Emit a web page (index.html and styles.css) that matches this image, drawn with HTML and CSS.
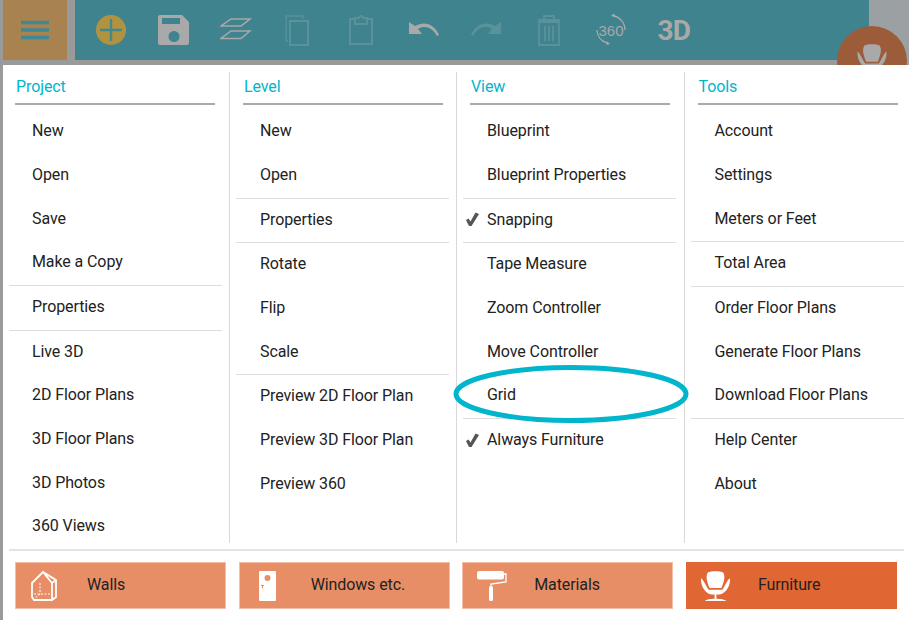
FILE: index.html
```html
<!DOCTYPE html>
<html lang="en">
<head>
<meta charset="utf-8">
<title>Floor plan menu</title>
<link rel="stylesheet" href="styles.css">
</head>
<body>
<header class="topbar">
  <button class="menu-btn">
    <svg width="28" height="20" viewBox="0 0 28 20"><path d="M0 2.500h28M0 10h28M0 17.500h28" stroke="#3f8894" stroke-width="3.500"/></svg>
  </button>
  <div class="toolbar">
    <span class="tool"><svg width="32" height="32" viewBox="0 0 32 32"><circle cx="16" cy="16" r="15" fill="#b1933f"/><path d="M16 5v22M5 16h22" stroke="#3f8894" stroke-width="2.400"/></svg></span>
    <span class="tool"><svg width="32" height="32" viewBox="0 0 32 32"><path fill="#a9a9a9" fill-rule="evenodd" d="M2 1h22l7 7v21a2 2 0 0 1-2 2H2a2 2 0 0 1-2-2V3a2 2 0 0 1 2-2zM4 4v6h18V4zM16 17a5.500 5.500 0 1 0 0 11 5.500 5.500 0 0 0 0-11z"/></svg></span>
    <span class="tool"><svg width="32" height="32" viewBox="0 0 32 32"><path d="M11 5H30L21 12H1zM11 17H30L21 24.500H1z" fill="none" stroke="#a9a9a9" stroke-width="1.500"/></svg></span>
    <span class="tool"><svg width="32" height="32" viewBox="0 0 32 32"><path d="M5 27H3V2h17v3" fill="none" stroke="#5a929c" stroke-width="1.300"/><rect x="7" y="7" width="18" height="24" fill="none" stroke="#5a929c" stroke-width="2"/></svg></span>
    <span class="tool"><svg width="32" height="32" viewBox="0 0 32 32"><path d="M10 5H5v25h22V5h-5" fill="none" stroke="#5a929c" stroke-width="2"/><path d="M10 4h4a2 2 0 0 1 4 0h4v6H10z" fill="none" stroke="#5a929c" stroke-width="2"/></svg></span>
    <span class="tool"><svg width="32" height="32" viewBox="0 0 32 32"><path d="M1 8v12h13l-4-5c7-4 14-2 19 7l2-1c-4-10-14-15-24-9z" fill="#a9a9a9"/></svg></span>
    <span class="tool"><svg width="32" height="32" viewBox="0 0 32 32"><path d="M31 8v12H18l4-5c-7-4-14-2-19 7l-2-1c4-10 14-15 24-9z" fill="#5a929c"/></svg></span>
    <span class="tool"><svg width="32" height="32" viewBox="0 0 32 32"><path d="M6 8h20v23H6zM5 6h22M11 6V2h10v4M12 12v15M16 12v15M20 12v15" fill="none" stroke="#5a929c" stroke-width="1.800"/></svg></span>
    <span class="tool"><svg class="icon-360" width="32" height="32" viewBox="0 0 32 32"><path d="M18 1.500C25 3 30 9 30 16M2 16C2 22 6 27 12 29" fill="none" stroke="#a9a9a9" stroke-width="1.300"/><path d="M16 1.500l3.500-2v4zM15 30l-3.500-3v4z" fill="#a9a9a9"/><text x="16" y="22" text-anchor="middle" class="t360">360</text></svg></span>
    <span class="tool three-d">3D</span>
  </div>
  <div class="side"></div>
  <div class="fab">
    <svg width="34" height="34" viewBox="0 0 40 40"><path d="M11 3C15 1 25 1 29 3 32 8 30 14 27 22H13C10 14 8 8 11 3zM3 10C6 12 8 18 12 24H28C32 18 34 12 37 10 38 18 33 28 25 30H15C7 28 2 18 3 10z" fill="#a9a9a9"/></svg>
  </div>
</header>

<main class="panel">
  <div class="columns">
    <section class="col col-first">
      <h2 class="col-title">Project</h2>
      <ul class="items">
        <li class="item">New</li>
        <li class="item">Open</li>
        <li class="item">Save</li>
        <li class="item">Make a Copy</li>
        <li class="rule"></li>
        <li class="item">Properties</li>
        <li class="rule"></li>
        <li class="item">Live 3D</li>
        <li class="item">2D Floor Plans</li>
        <li class="item">3D Floor Plans</li>
        <li class="item">3D Photos</li>
        <li class="item">360 Views</li>
      </ul>
    </section>
    <section class="col">
      <h2 class="col-title">Level</h2>
      <ul class="items">
        <li class="item">New</li>
        <li class="item">Open</li>
        <li class="rule"></li>
        <li class="item">Properties</li>
        <li class="rule"></li>
        <li class="item">Rotate</li>
        <li class="item">Flip</li>
        <li class="item">Scale</li>
        <li class="rule"></li>
        <li class="item">Preview 2D Floor Plan</li>
        <li class="item">Preview 3D Floor Plan</li>
        <li class="item">Preview 360</li>
      </ul>
    </section>
    <section class="col">
      <h2 class="col-title">View</h2>
      <ul class="items">
        <li class="item">Blueprint</li>
        <li class="item">Blueprint Properties</li>
        <li class="rule"></li>
        <li class="item"><svg class="check" width="14" height="14" viewBox="0 0 14 14"><path d="M1 8l2.500-1.500 2 3L10.500 0.500 14 2 6.500 14H4z" fill="#555"/></svg>Snapping</li>
        <li class="rule"></li>
        <li class="item">Tape Measure</li>
        <li class="item">Zoom Controller</li>
        <li class="item">Move Controller</li>
        <li class="item">Grid</li>
        <li class="rule"></li>
        <li class="item"><svg class="check" width="14" height="14" viewBox="0 0 14 14"><path d="M1 8l2.500-1.500 2 3L10.500 0.500 14 2 6.500 14H4z" fill="#555"/></svg>Always Furniture</li>
      </ul>
    </section>
    <section class="col col-last">
      <h2 class="col-title">Tools</h2>
      <ul class="items">
        <li class="item">Account</li>
        <li class="item">Settings</li>
        <li class="item">Meters or Feet</li>
        <li class="rule"></li>
        <li class="item">Total Area</li>
        <li class="rule"></li>
        <li class="item">Order Floor Plans</li>
        <li class="item">Generate Floor Plans</li>
        <li class="item">Download Floor Plans</li>
        <li class="rule"></li>
        <li class="item">Help Center</li>
        <li class="item">About</li>
      </ul>
    </section>
  </div>
  <div class="foot-rule"></div>
  <nav class="tabs">
    <a class="tab">
      <svg class="tab-icon" width="30" height="32" viewBox="0 0 30 32"><path d="M1 13L12 2 25 10V27L21 30H3L1 27zM12 2L21 13V30M21 13L25 10" fill="none" stroke="#fff" stroke-width="1.800"/><path d="M9 13V24M3 24H19M9 24L4 28" fill="none" stroke="#fff" stroke-width="1" stroke-dasharray="2 1.500"/></svg>
      Walls
    </a>
    <a class="tab">
      <svg class="tab-icon" width="30" height="32" viewBox="0 0 30 32"><path fill="#fff" fill-rule="evenodd" d="M5 1h15a1 1 0 0 1 1 1v28a1 1 0 0 1-1 1H5a1 1 0 0 1-1-1V2a1 1 0 0 1 1-1zM12.500 5a3 3 0 1 0 0 6 3 3 0 0 0 0-6z"/><path d="M6 15.500h3M7.500 15.500v3" stroke="#e88e66" stroke-width="1"/></svg>
      Windows etc.
    </a>
    <a class="tab">
      <svg class="tab-icon" width="30" height="32" viewBox="0 0 30 32"><rect x="-1" y="1" width="27" height="8.500" rx="2" fill="#fff"/><path d="M26 4h2v8l-15 2v4" fill="none" stroke="#fff" stroke-width="1.300"/><rect x="11" y="16" width="4" height="15" rx="1.500" fill="#fff"/></svg>
      Materials
    </a>
    <a class="tab tab-active">
      <svg class="tab-icon" width="30" height="32" viewBox="0 0 30 32"><path transform="translate(-3.500 0) scale(.85 .82)" d="M11 3C15 1 25 1 29 3 32 8 30 14 27 22H13C10 14 8 8 11 3zM3 10C6 12 8 18 12 24H28C32 18 34 12 37 10 38 18 33 28 25 30H15C7 28 2 18 3 10z" fill="#fff"/><path d="M13.500 24v5" stroke="#fff" stroke-width="1.800"/><path d="M3 31c1-3 20-3 21 0z" fill="#fff"/></svg>
      Furniture
    </a>
  </nav>
  <svg class="highlight" width="240" height="66" viewBox="0 0 240 66"><ellipse cx="120" cy="33" rx="115" ry="26.500" fill="none" stroke="#00b5cc" stroke-width="5"/></svg>
</main>
</body>
</html>
```

FILE: styles.css
```css
* { box-sizing: border-box; }
html, body { margin: 0; padding: 0; }
body {
  width: 909px;
  height: 620px;
  overflow: hidden;
  background: #9a9a9a;
  font-family: "Roboto", sans-serif;
  font-size: 16px;
  letter-spacing: -0.1px;
  color: #222;
}
.topbar {
  position: relative;
  display: flex;
  height: 65px;
  padding-left: 3px;
}
.menu-btn {
  width: 64px;
  height: 60px;
  border: 0;
  padding: 0;
  background: #a8824f;
  display: flex;
  align-items: center;
  justify-content: center;
}
.toolbar {
  margin-left: 8px;
  width: 794px;
  height: 60px;
  background: #3f838f;
  display: flex;
  align-items: center;
  padding-left: 5px;
}
.tool {
  width: 62.500px;
  display: flex;
  justify-content: center;
  align-items: center;
}
.three-d {
  font-family: "Roboto", sans-serif;
  font-weight: 700;
  font-size: 28px;
  letter-spacing: -1px;
  color: #a9a9a9;
}
.icon-360 { overflow: visible; }
.t360 {
  font-family: "Liberation Sans", sans-serif;
  font-size: 15px;
  letter-spacing: 0;
  fill: #a9a9a9;
}
.side {
  flex: 1;
  background: #9ba0a2;
  height: 65px;
}
.fab {
  position: absolute;
  left: 837px;
  top: 26px;
  width: 70px;
  height: 70px;
  border-radius: 50%;
  background: #9c5c3a;
  display: flex;
  justify-content: center;
  padding-top: 17px;
}
.panel {
  position: relative;
  margin-left: 3px;
  height: 555px;
  background: #fff;
  padding-top: 7px;
  overflow: hidden;
}
.columns {
  display: grid;
  grid-template-columns: 227px 227px 227.500px 225px;
  grid-template-rows: 471px;
}
.col {
  border-right: 1px solid #d9d9d9;
  padding-left: 6px;
  padding-right: 7px;
}
.col-last { border-right: 0; padding-right: 0; }
.col-title {
  margin: 0 0 5.300px 7px;
  width: 200px;
  height: 33px;
  border-bottom: 2px solid #aaa;
  font-size: 16px;
  font-weight: 400;
  color: #00b5cc;
  line-height: 30px;
  padding-left: 1px;
}
.col-first .col-title { margin-left: 6px; }
.items { list-style: none; margin: 0; padding: 0; width: 213px; }
.item {
  height: 43.670px;
  padding: 0 0 2.400px 24px;
  display: flex;
  align-items: center;
  white-space: nowrap;
}
.col-first .item { padding-left: 23px; }
.rule { height: 1px; background: #dedede; }
.check { margin-left: -22px; margin-right: 8px; }
.foot-rule {
  height: 2px;
  margin: 6px 5px 0 6px;
  background: #e4e4e4;
}
.tabs {
  display: grid;
  grid-template-columns: repeat(4, 1fr);
  column-gap: 12.500px;
  margin: 11px 12px 0 12px;
}
.tab {
  height: 47px;
  background: #e88e66;
  border: 1px solid #f3bfa6;
  display: flex;
  align-items: center;
  padding: 0 0 2px 15px;
  white-space: nowrap;
  color: #222;
}
.tab-icon { width: 30px; margin-right: 26px; margin-top: 2px; flex: none; overflow: visible; }
.tab-active { background: #e06733; border-color: #e06733; }
.highlight {
  position: absolute;
  left: 448px;
  top: 296px;
}
```
